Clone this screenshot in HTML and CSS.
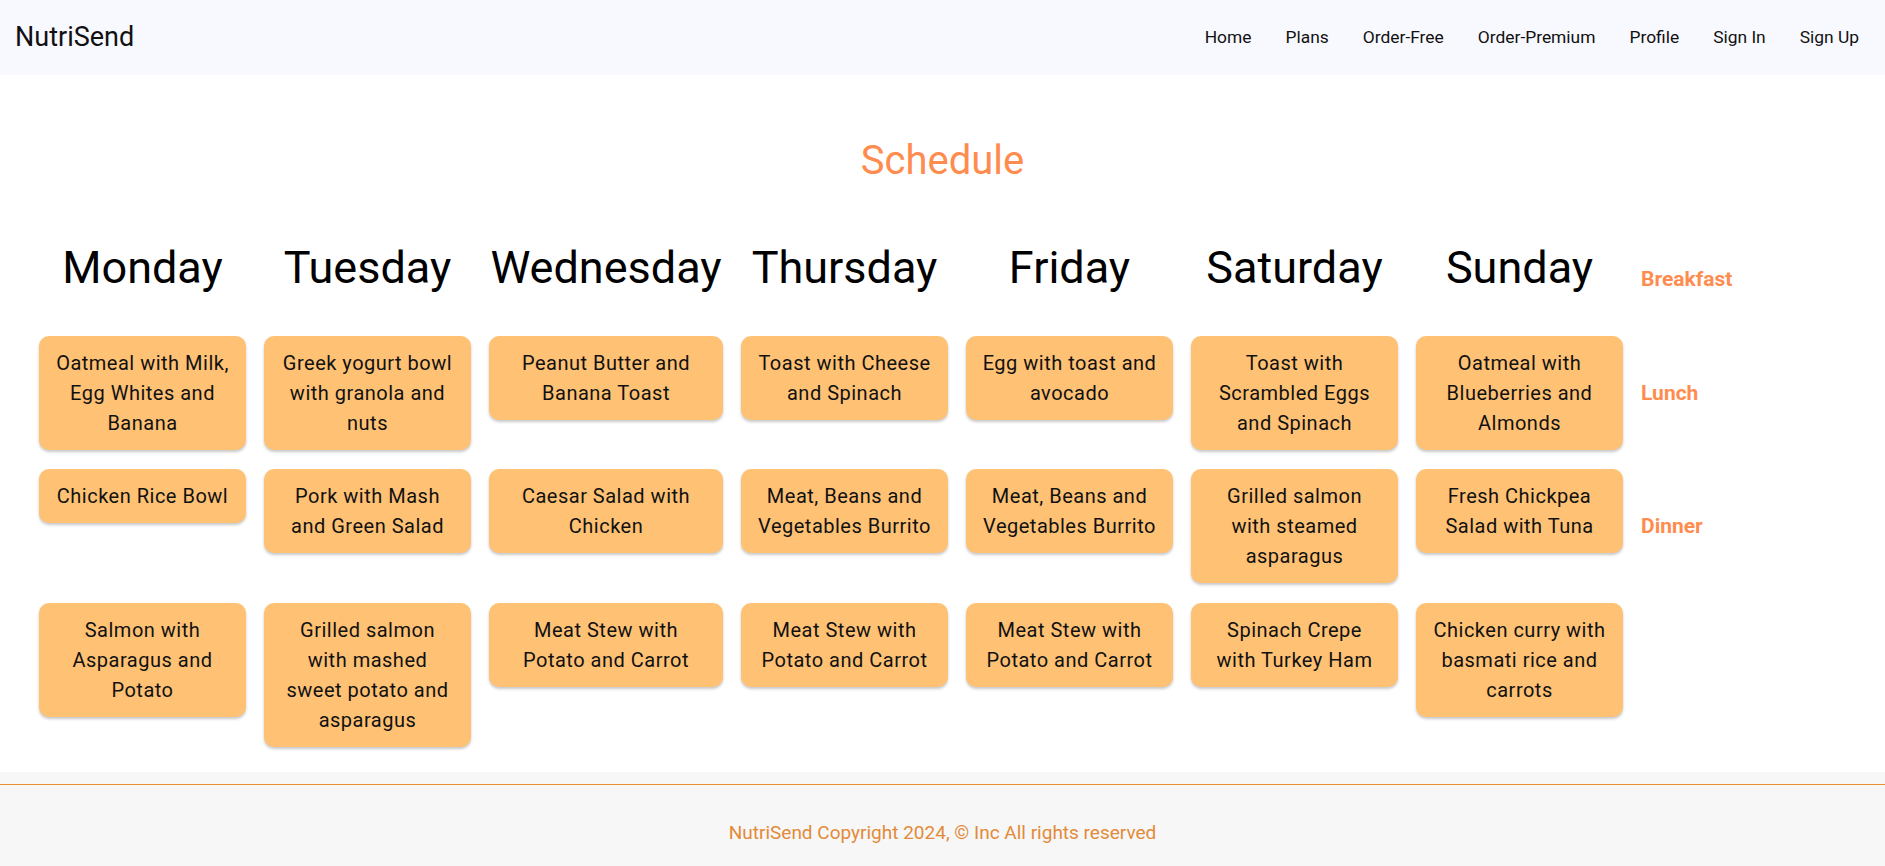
FILE: index.html
```html
<!DOCTYPE html>
<html lang="en">
<head>
<meta charset="utf-8">
<title>NutriSend - Schedule</title>
<link rel="stylesheet" href="styles.css">
</head>
<body>
<nav class="navbar">
  <a class="brand" href="#">NutriSend</a>
  <ul class="nav-links">
    <li><a href="#">Home</a></li>
    <li><a href="#">Plans</a></li>
    <li><a href="#">Order-Free</a></li>
    <li><a href="#">Order-Premium</a></li>
    <li><a href="#">Profile</a></li>
    <li><a href="#">Sign In</a></li>
    <li><a href="#">Sign Up</a></li>
  </ul>
</nav>
<main class="page">
  <h1 class="title">Schedule</h1>
  <div class="schedule">
    <div class="day">Monday</div>
    <div class="day">Tuesday</div>
    <div class="day">Wednesday</div>
    <div class="day">Thursday</div>
    <div class="day">Friday</div>
    <div class="day">Saturday</div>
    <div class="day">Sunday</div>
    <div class="meal-label label-head">Breakfast</div>

    <div class="meal">Oatmeal with Milk, Egg Whites and Banana</div>
    <div class="meal">Greek yogurt bowl with granola and nuts</div>
    <div class="meal">Peanut Butter and Banana Toast</div>
    <div class="meal">Toast with Cheese and Spinach</div>
    <div class="meal">Egg with toast and avocado</div>
    <div class="meal">Toast with Scrambled Eggs and Spinach</div>
    <div class="meal">Oatmeal with Blueberries and Almonds</div>
    <div class="meal-label">Lunch</div>

    <div class="meal">Chicken Rice Bowl</div>
    <div class="meal">Pork with Mash and Green Salad</div>
    <div class="meal">Caesar Salad with Chicken</div>
    <div class="meal">Meat, Beans and Vegetables Burrito</div>
    <div class="meal">Meat, Beans and Vegetables Burrito</div>
    <div class="meal">Grilled salmon with steamed asparagus</div>
    <div class="meal">Fresh Chickpea Salad with Tuna</div>
    <div class="meal-label">Dinner</div>

    <div class="meal">Salmon with Asparagus and Potato</div>
    <div class="meal">Grilled salmon with mashed sweet potato and asparagus</div>
    <div class="meal">Meat Stew with Potato and Carrot</div>
    <div class="meal">Meat Stew with Potato and Carrot</div>
    <div class="meal">Meat Stew with Potato and Carrot</div>
    <div class="meal">Spinach Crepe with Turkey Ham</div>
    <div class="meal">Chicken curry with basmati rice and carrots</div>
    <div class="meal-label"></div>
  </div>
</main>
<footer class="footer">
  <div class="footer-inner">
    <p class="copyright">NutriSend Copyright 2024, © Inc All rights reserved</p>
  </div>
</footer>
</body>
</html>
```

FILE: styles.css
```css
* {
  box-sizing: border-box;
}

body {
  margin: 0;
  font-family: Roboto, "Liberation Sans", Arial, sans-serif;
  color: #000;
  background: #fff;
}

.navbar {
  height: 75px;
  background: #f8f8ff;
  display: flex;
  align-items: center;
  justify-content: space-between;
  padding: 0 9px 0 15px;
}

.brand {
  font-size: 27px;
  color: #111;
  text-decoration: none;
  line-height: 1;
}

.nav-links {
  list-style: none;
  margin: 0;
  padding: 0;
  display: flex;
  align-items: center;
}

.nav-links a {
  display: block;
  padding: 8px 17px;
  font-size: 17.4px;
  font-weight: 400;
  color: #111;
  text-decoration: none;
  line-height: 1.2;
}

.page {
  padding: 62px 0 25px 39px;
}

.title {
  margin: 0 0 57px;
  text-align: center;
  font-size: 40px;
  font-weight: 400;
  line-height: normal;
  color: #ff8c4f;
  padding-right: 39px;
}

.schedule {
  display: grid;
  grid-template-columns: 207px 207px 234px 207px 207px 207px 207px auto;
  column-gap: 18px;
  row-gap: 19.5px;
}

.day {
  font-size: 45px;
  line-height: normal;
  text-align: center;
  padding-bottom: 22px;
  white-space: nowrap;
}

.meal {
  align-self: start;
  background: #ffc174;
  border-radius: 10px;
  box-shadow: 0 2px 3px rgba(0, 0, 0, 0.22);
  padding: 12px 15px;
  font-size: 20px;
  line-height: 30px;
  letter-spacing: 0.5px;
  text-align: center;
  color: #111;
}

.meal-label {
  align-self: center;
  font-size: 21px;
  font-weight: 700;
  color: #ff8c4f;
  line-height: normal;
}

.footer {
  background: #f7f7f7;
  padding-top: 12px;
}

.footer-inner {
  border-top: 1px solid #e8902f;
  padding: 36px 0 22px;
  text-align: center;
}

.copyright {
  margin: 0;
  font-size: 19px;
  line-height: normal;
  color: #e38a39;
}
```
